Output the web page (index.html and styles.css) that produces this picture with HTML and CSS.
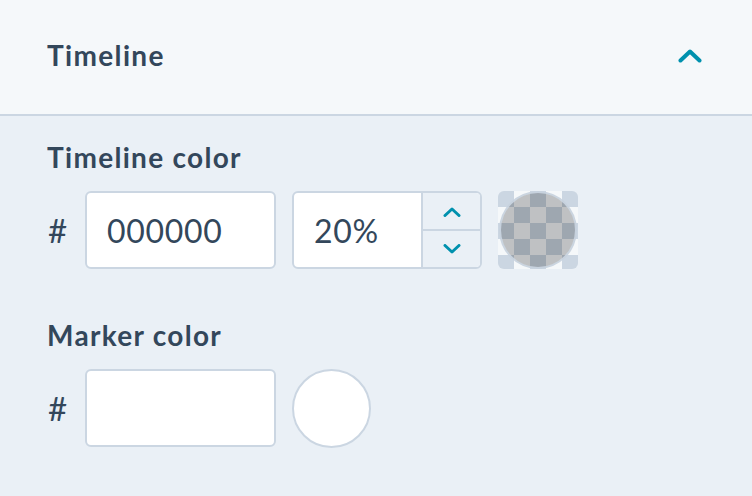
FILE: index.html
```html
<!DOCTYPE html>
<html lang="en">
<head>
<meta charset="utf-8">
<title>Timeline</title>
<link rel="stylesheet" href="styles.css">
</head>
<body>
<div class="panel">
  <header class="panel-header">
    <h2 class="panel-title">Timeline</h2>
    <svg class="collapse" width="24" height="14" viewBox="0 0 24 14" aria-hidden="true">
      <path d="M2.5 11.5 L12 2.5 L21.5 11.5" fill="none" stroke="#0091ae" stroke-width="4" stroke-linecap="round" stroke-linejoin="round"/>
    </svg>
  </header>
  <section class="panel-body">
    <div class="field">
      <div class="field-label">Timeline color</div>
      <div class="field-row">
        <span class="hash">#</span>
        <div class="text-input hex">000000</div>
        <div class="text-input opacity">
          <span class="opacity-value">20%</span>
          <div class="stepper">
            <div class="step step-up">
              <svg width="18" height="10" viewBox="0 0 18 10" aria-hidden="true"><path d="M2 8.5 L9 2 L16 8.5" fill="none" stroke="#0091ae" stroke-width="3" stroke-linecap="round" stroke-linejoin="round"/></svg>
            </div>
            <div class="step step-down">
              <svg width="18" height="10" viewBox="0 0 18 10" aria-hidden="true"><path d="M2 1.5 L9 8 L16 1.5" fill="none" stroke="#0091ae" stroke-width="3" stroke-linecap="round" stroke-linejoin="round"/></svg>
            </div>
          </div>
        </div>
        <div class="swatch checker"><div class="swatch-dot tint"></div></div>
      </div>
    </div>
    <div class="field field-second">
      <div class="field-label">Marker color</div>
      <div class="field-row">
        <span class="hash">#</span>
        <div class="text-input hex"></div>
        <div class="swatch-dot plain"></div>
      </div>
    </div>
  </section>
</div>
</body>
</html>
```
FILE: styles.css
```css
* { box-sizing: border-box; }
html, body { margin: 0; padding: 0; }
body {
  width: 752px;
  height: 496px;
  overflow: hidden;
  background: #eaf0f6;
  font-family: Lato, "Noto Sans", sans-serif;
  color: #33475b;
}
.panel-header {
  height: 116px;
  background: #f5f8fa;
  border-bottom: 2px solid #cbd6e2;
  display: flex;
  align-items: center;
  justify-content: space-between;
  padding: 0 50px 2px 47px;
}
.panel-title {
  margin: 0;
  font-size: 28px;
  font-weight: 700;
  line-height: 36px;
  letter-spacing: 1.35px;
  padding-bottom: 2px;
}
.collapse { display: block; }
.panel-body {
  padding: 23px 0 0 47px;
}
.field-label {
  font-size: 28px;
  font-weight: 700;
  line-height: 36px;
  letter-spacing: 1.3px;
}
.field-second { margin-top: 48px; }
.field-row {
  margin-top: 16px;
  display: flex;
  align-items: center;
  height: 78px;
}
.hash {
  width: 38px;
  font-size: 33px;
  line-height: 40px;
  padding-left: 1px;
}
.text-input {
  height: 78px;
  background: #fff;
  border: 2px solid #cbd6e2;
  border-radius: 6px;
  display: flex;
  align-items: center;
  font-size: 32px;
  letter-spacing: 0.7px;
  padding-left: 20px;
  margin-right: 16px;
}
.hex { width: 191px; }
.opacity {
  width: 190px;
  padding-left: 0;
  overflow: hidden;
  align-items: stretch;
}
.opacity-value {
  flex: 1;
  display: flex;
  align-items: center;
  padding-left: 20px;
}
.stepper {
  width: 59px;
  border-left: 2px solid #cbd6e2;
  background: #eaf0f6;
  display: flex;
  flex-direction: column;
}
.step {
  flex: 1;
  display: flex;
  align-items: center;
  justify-content: center;
}
.step-up { border-bottom: 2px solid #cbd6e2; padding-top: 1px; }
.step-down { padding-bottom: 1px; }
.swatch {
  width: 80px;
  height: 78px;
  border-radius: 6px;
  display: flex;
  align-items: center;
  justify-content: center;
}
.checker {
  background-color: #f5f8fa;
  background-image: conic-gradient(#f5f8fa 25%, #cbd6e2 0 50%, #f5f8fa 0 75%, #cbd6e2 0);
  background-size: 32px 32px;
  background-position: 0 0;
}
.swatch-dot {
  width: 79px;
  height: 79px;
  border-radius: 50%;
  border: 2px solid #cbd6e2;
  flex: none;
}
.tint {
  width: 78px;
  height: 78px;
  background: rgba(0, 0, 0, 0.22);
  border-color: rgba(203, 214, 226, 0.9);
}
.plain { background: #fff; }
```
